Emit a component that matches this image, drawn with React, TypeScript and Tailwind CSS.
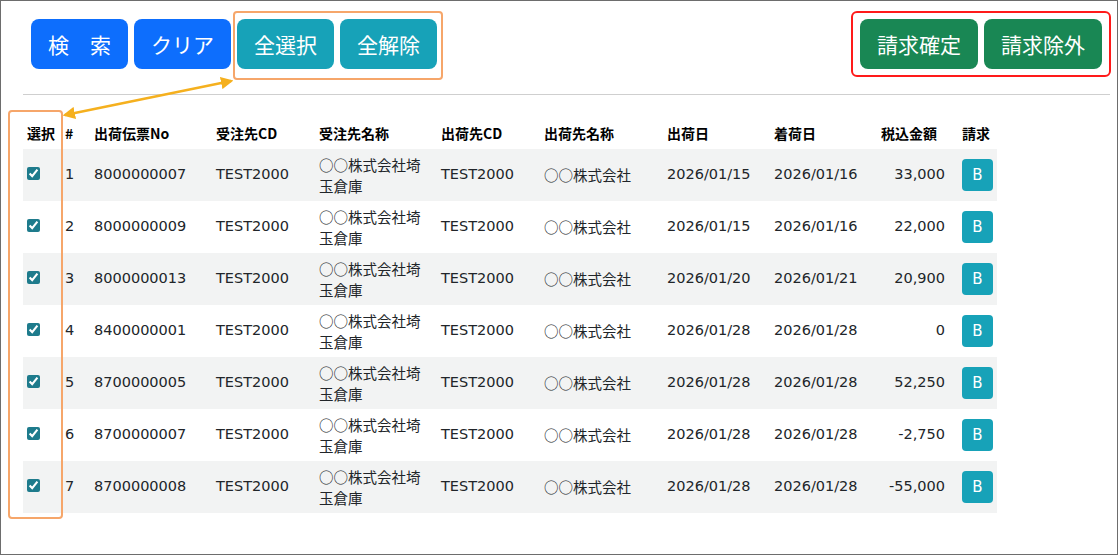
import React from "react";

type Row = {
  no: string;
  amount: string;
  ship: string;
  arrive: string;
};

const rows: Row[] = [
  { no: "8000000007", ship: "2026/01/15", arrive: "2026/01/16", amount: "33,000" },
  { no: "8000000009", ship: "2026/01/15", arrive: "2026/01/16", amount: "22,000" },
  { no: "8000000013", ship: "2026/01/20", arrive: "2026/01/21", amount: "20,900" },
  { no: "8400000001", ship: "2026/01/28", arrive: "2026/01/28", amount: "0" },
  { no: "8700000005", ship: "2026/01/28", arrive: "2026/01/28", amount: "52,250" },
  { no: "8700000007", ship: "2026/01/28", arrive: "2026/01/28", amount: "-2,750" },
  { no: "8700000008", ship: "2026/01/28", arrive: "2026/01/28", amount: "-55,000" },
];

const latin = { fontFamily: '"DejaVu Sans", "Noto Sans CJK JP", sans-serif' };
const cjk = { fontFamily: '"Noto Sans CJK JP", "DejaVu Sans", sans-serif' };

const Btn: React.FC<{ color: string; children: React.ReactNode }> = ({ color, children }) => (
  <button
    className={`h-[50px] px-[17px] rounded-lg text-white text-[21px] leading-none ${color}`}
    style={cjk}
  >
    {children}
  </button>
);

const App: React.FC = () => {
  return (
    <div className="w-[1118px] h-[555px] bg-white border border-[#6d6d6d] relative overflow-hidden" style={latin}>
      <div className="pl-[22px] pr-[7px] pt-[18px]">
        <div className="flex justify-between px-2">
          <div className="flex gap-[6px]">
            <Btn color="bg-[#0d6efd]">検　索</Btn>
            <Btn color="bg-[#0d6efd]">クリア</Btn>
            <Btn color="bg-[#17a2b8]">全選択</Btn>
            <Btn color="bg-[#17a2b8]">全解除</Btn>
          </div>
          <div className="flex gap-[6px]">
            <Btn color="bg-[#198754]">請求確定</Btn>
            <Btn color="bg-[#198754]">請求除外</Btn>
          </div>
        </div>
        <hr className="mt-[25px] border-t border-[#cfcfcf]" />
        <table className="mt-[22px] table-fixed border-collapse w-[974px] text-[14.5px] text-[#212529]">
          <colgroup>
            <col className="w-[38px]" />
            <col className="w-[29px]" />
            <col className="w-[122px]" />
            <col className="w-[103px]" />
            <col className="w-[122px]" />
            <col className="w-[103px]" />
            <col className="w-[123px]" />
            <col className="w-[107px]" />
            <col className="w-[107px]" />
            <col className="w-[81px]" />
            <col className="w-[39px]" />
          </colgroup>
          <thead>
            <tr className="h-[32px] text-[14px] font-bold text-black text-left" style={cjk}>
              <th className="pl-1 font-bold">選択</th>
              <th className="pl-1 font-bold">#</th>
              <th className="pl-1 font-bold">出荷伝票No</th>
              <th className="pl-1 font-bold">受注先CD</th>
              <th className="pl-1 font-bold">受注先名称</th>
              <th className="pl-1 font-bold">出荷先CD</th>
              <th className="pl-1 font-bold">出荷先名称</th>
              <th className="pl-1 font-bold">出荷日</th>
              <th className="pl-1 font-bold">着荷日</th>
              <th className="pl-1 font-bold">税込金額</th>
              <th className="pl-1 font-bold">請求</th>
            </tr>
          </thead>
          <tbody>
            {rows.map((r, i) => (
              <tr key={r.no} className={`h-[52px] ${i % 2 === 0 ? "bg-[#f2f3f3]" : "bg-white"}`}>
                <td className="pl-1">
                  <input type="checkbox" defaultChecked className="block w-[13px] h-[13px] m-0 -mt-[3px] accent-[#1e7b8c]" />
                </td>
                <td className="pl-1">{i + 1}</td>
                <td className="pl-1">{r.no}</td>
                <td className="pl-1">TEST2000</td>
                <td className="pl-1" style={cjk}>
                  <div className="w-[108px] leading-[21px] text-[14.5px]">○○株式会社埼玉倉庫</div>
                </td>
                <td className="pl-1">TEST2000</td>
                <td className="pl-1" style={cjk}>○○株式会社</td>
                <td className="pl-1">{r.ship}</td>
                <td className="pl-1">{r.arrive}</td>
                <td className="pr-[13px] text-right">{r.amount}</td>
                <td className="pl-1">
                  <button className="w-[31px] h-[32px] rounded bg-[#17a2b8] text-white text-[15px] leading-none">B</button>
                </td>
              </tr>
            ))}
          </tbody>
        </table>
      </div>

      {/* annotations */}
      <div className="absolute left-[232px] top-[10px] w-[210px] h-[69px] border-2 border-[#f6a66a] rounded" />
      <div className="absolute left-[850px] top-[10px] w-[260px] h-[66px] border-2 border-[#ff1a1a] rounded-md" />
      <div className="absolute left-[7px] top-[109px] w-[55px] h-[409px] border-2 border-[#f6a66a] rounded" />
      <svg className="absolute left-0 top-0 pointer-events-none" width="1118" height="555">
        <defs>
          <marker id="ah" viewBox="0 0 10 10" refX="8" refY="5" markerWidth="5" markerHeight="5" orient="auto-start-reverse">
            <path d="M0,0 L10,5 L0,10 z" fill="#f5b01e" />
          </marker>
        </defs>
        <line x1="64" y1="114" x2="230" y2="80" stroke="#f5b01e" strokeWidth="2.5" markerStart="url(#ah)" markerEnd="url(#ah)" />
      </svg>
    </div>
  );
};

export default App;
